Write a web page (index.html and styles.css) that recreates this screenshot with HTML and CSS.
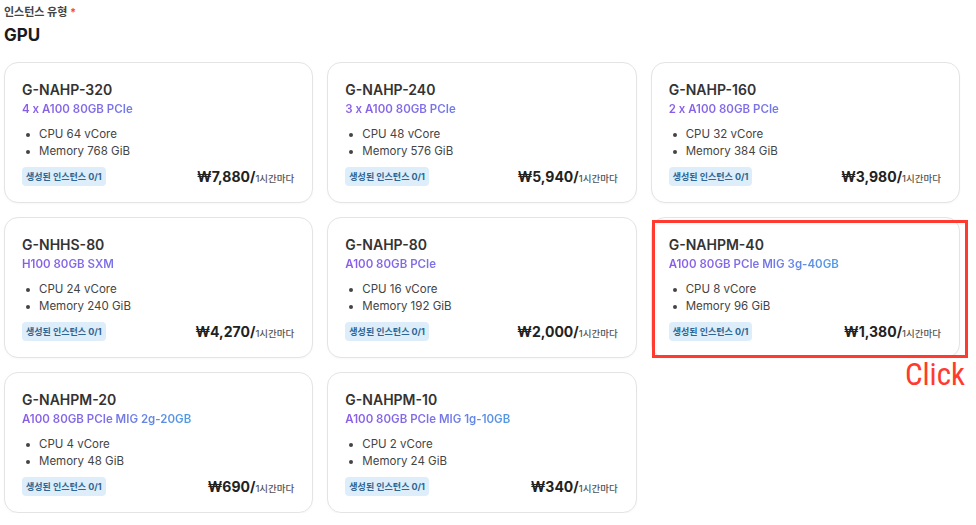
FILE: index.html
```html
<!DOCTYPE html>
<html lang="ko">
<head>
<meta charset="utf-8">
<link rel="stylesheet" href="styles.css">
</head>
<body>
<div class="page">
  <div class="label">인스턴스 유형 <span class="req">*</span></div>
  <div class="group">GPU</div>
  <div class="grid">
    <div class="card">
      <div class="title">G-NAHP-320</div>
      <div class="sub">4 x A100 80GB PCIe</div>
      <ul class="specs"><li>CPU 64 vCore</li><li>Memory 768 GiB</li></ul>
      <div class="foot"><span class="badge">생성된 인스턴스 0/1</span><span class="price"><b>₩7,880</b>/<small>1시간마다</small></span></div>
    </div>
    <div class="card">
      <div class="title">G-NAHP-240</div>
      <div class="sub">3 x A100 80GB PCIe</div>
      <ul class="specs"><li>CPU 48 vCore</li><li>Memory 576 GiB</li></ul>
      <div class="foot"><span class="badge">생성된 인스턴스 0/1</span><span class="price"><b>₩5,940</b>/<small>1시간마다</small></span></div>
    </div>
    <div class="card">
      <div class="title">G-NAHP-160</div>
      <div class="sub">2 x A100 80GB PCIe</div>
      <ul class="specs"><li>CPU 32 vCore</li><li>Memory 384 GiB</li></ul>
      <div class="foot"><span class="badge">생성된 인스턴스 0/1</span><span class="price"><b>₩3,980</b>/<small>1시간마다</small></span></div>
    </div>
    <div class="card">
      <div class="title">G-NHHS-80</div>
      <div class="sub">H100 80GB SXM</div>
      <ul class="specs"><li>CPU 24 vCore</li><li>Memory 240 GiB</li></ul>
      <div class="foot"><span class="badge">생성된 인스턴스 0/1</span><span class="price"><b>₩4,270</b>/<small>1시간마다</small></span></div>
    </div>
    <div class="card">
      <div class="title">G-NAHP-80</div>
      <div class="sub">A100 80GB PCIe</div>
      <ul class="specs"><li>CPU 16 vCore</li><li>Memory 192 GiB</li></ul>
      <div class="foot"><span class="badge">생성된 인스턴스 0/1</span><span class="price"><b>₩2,000</b>/<small>1시간마다</small></span></div>
    </div>
    <div class="card selected">
      <div class="title">G-NAHPM-40</div>
      <div class="sub">A100 80GB PCIe MIG 3g-40GB</div>
      <ul class="specs"><li>CPU 8 vCore</li><li>Memory 96 GiB</li></ul>
      <div class="foot"><span class="badge">생성된 인스턴스 0/1</span><span class="price"><b>₩1,380</b>/<small>1시간마다</small></span></div>
      <div class="highlight"></div>
      <div class="click">Click</div>
    </div>
    <div class="card">
      <div class="title">G-NAHPM-20</div>
      <div class="sub">A100 80GB PCIe MIG 2g-20GB</div>
      <ul class="specs"><li>CPU 4 vCore</li><li>Memory 48 GiB</li></ul>
      <div class="foot"><span class="badge">생성된 인스턴스 0/1</span><span class="price"><b>₩690</b>/<small>1시간마다</small></span></div>
    </div>
    <div class="card">
      <div class="title">G-NAHPM-10</div>
      <div class="sub">A100 80GB PCIe MIG 1g-10GB</div>
      <ul class="specs"><li>CPU 2 vCore</li><li>Memory 24 GiB</li></ul>
      <div class="foot"><span class="badge">생성된 인스턴스 0/1</span><span class="price"><b>₩340</b>/<small>1시간마다</small></span></div>
    </div>
  </div>
</div>
</body>
</html>
```

FILE: styles.css
```css
* { box-sizing: border-box; }
html, body { margin: 0; padding: 0; background: #fff; }
body {
  font-family: Inter, "Noto Sans CJK KR", "Noto Sans", sans-serif;
  color: #333;
}
.page {
  padding: 4px 16px 0 4px;
}
.label {
  font-size: 11px;
  line-height: 16px;
  font-weight: 700;
  color: #444;
}
.req { color: #f04b4b; }
.group {
  margin-top: 3px;
  font-size: 17px;
  line-height: 24px;
  font-weight: 700;
  color: #1b1b1b;
}
.grid {
  margin-top: 15px;
  display: grid;
  grid-template-columns: repeat(3, 1fr);
  column-gap: 14px;
  row-gap: 14px;
}
.card {
  position: relative;
  border: 1px solid #e4e4e4;
  border-radius: 14px;
  padding: 17px 17px 16px 17px;
  background: #fff;
  box-shadow: 0 1px 2px rgba(0,0,0,0.03);
}
.title {
  font-size: 14px;
  line-height: 20px;
  font-weight: 600;
  color: #333;
}
.sub {
  font-size: 11.5px;
  line-height: 18px;
  font-weight: 600;
  background: linear-gradient(90deg, #8a5ce8 0px, #7f6ee6 80px, #4c9de4 170px, #45a4e4 240px);
  -webkit-background-clip: text;
  background-clip: text;
  color: transparent;
}
.specs {
  list-style: none;
  margin: 8px 0 0 0;
  padding: 0;
}
.specs li {
  position: relative;
  padding-left: 17px;
  font-size: 11.5px;
  line-height: 17px;
  color: #444;
}
.specs li::before {
  content: "";
  position: absolute;
  left: 4px;
  top: 7px;
  width: 4px;
  height: 4px;
  border-radius: 50%;
  background: #444;
}
.foot {
  margin-top: 7px;
  display: flex;
  align-items: center;
  justify-content: space-between;
}
.badge {
  background: #ddeefa;
  color: #2e6592;
  font-size: 9px;
  font-weight: 700;
  line-height: 19px;
  padding: 0 4px;
  border-radius: 4px;
}
.price {
  color: #222;
  font-size: 14px;
  font-weight: 700;
  padding-right: 1px;
}
.price b { font-weight: 700; }
.price small {
  font-size: 9.5px;
  font-weight: 500;
  color: #555;
}
.highlight {
  position: absolute;
  left: 0px;
  top: 2px;
  width: 316px;
  height: 138px;
  border: 3px solid #ff3b2f;
  pointer-events: none;
}
.click {
  position: absolute;
  right: -6px;
  top: 140px;
  font-family: "Liberation Sans Narrow", "Roboto Condensed", "Liberation Sans", sans-serif;
  font-size: 31px;
  line-height: 34px;
  color: #ff3b2f;
}
```
